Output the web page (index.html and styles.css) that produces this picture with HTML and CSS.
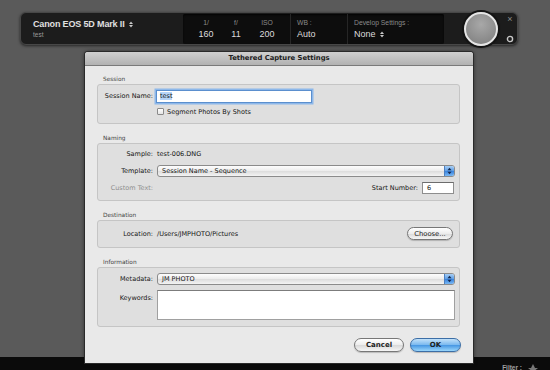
FILE: index.html
```html
<!DOCTYPE html>
<html lang="en">
<head>
    <meta charset="UTF-8" />
    <title>Tethered Capture Settings</title>
    <link rel="stylesheet" href="styles.css">
</head>
<body>

    <div class="escritorio">
        <div class="barra-camara">
            <div class="camara">
                <div class="camara-nombre">Canon EOS 5D Mark II
                    <svg class="flechas" width="4" height="7" viewBox="0 0 4 7"><polygon points="0,3 2,0.5 4,3" /><polygon points="0,4 2,6.5 4,4" /></svg>
                </div>
                <div class="camara-sesion">test</div>
            </div>

            <div class="panel">
                <div class="dato"><span class="etiqueta">1/</span><span class="valor">160</span></div>
                <div class="dato"><span class="etiqueta">f/</span><span class="valor">11</span></div>
                <div class="dato iso"><span class="etiqueta">ISO</span><span class="valor">200</span></div>
                <div class="separador"></div>
                <div class="dato izq wb"><span class="etiqueta">WB :</span><span class="valor">Auto</span></div>
                <div class="separador"></div>
                <div class="dato izq develop"><span class="etiqueta">Develop Settings :</span>
                    <span class="valor">None
                        <svg class="flechas" width="4" height="7" viewBox="0 0 4 7"><polygon points="0,3 2,0.5 4,3" /><polygon points="0,4 2,6.5 4,4" /></svg>
                    </span>
                </div>
            </div>

            <div class="disparador"></div>

            <div class="controles">
                <span class="cerrar">×</span>
                <svg width="8" height="8" viewBox="0 0 8 8"><circle cx="4" cy="4" r="2.6" fill="none" stroke="#c8c8c8" stroke-width="1.4" /></svg>
            </div>
        </div>

        <div class="area"></div>

        <div class="barra-inferior">
            <span>Filter :</span>
            <svg width="10" height="8" viewBox="0 0 10 8"><polygon points="5,0 7,4 10,4 5,8 0,4 3,4" fill="#777" /></svg>
        </div>
    </div>

    <div class="dialogo">
        <div class="dialogo-titulo">Tethered Capture Settings</div>

        <div class="dialogo-cuerpo">
            <div class="grupo-titulo">Session</div>
            <div class="grupo g-session">
                <div class="fila">
                    <span class="rotulo">Session Name:</span>
                    <div class="campo enfocado nombre"><span class="seleccion">test</span></div>
                </div>
                <div class="fila baja">
                    <span class="rotulo"></span>
                    <span class="casilla"></span>
                    <span class="texto-casilla">Segment Photos By Shots</span>
                </div>
            </div>

            <div class="grupo-titulo">Naming</div>
            <div class="grupo g-naming">
                <div class="fila">
                    <span class="rotulo">Sample:</span>
                    <span>test-006.DNG</span>
                </div>
                <div class="fila">
                    <span class="rotulo">Template:</span>
                    <div class="selector">
                        <span>Session Name - Sequence</span>
                        <span class="selector-boton">
                            <svg width="5" height="8" viewBox="0 0 5 8"><polygon points="0.5,3.2 2.5,0.8 4.5,3.2" /><polygon points="0.5,4.8 2.5,7.2 4.5,4.8" /></svg>
                        </span>
                    </div>
                </div>
                <div class="fila">
                    <span class="rotulo apagado">Custom Text:</span>
                    <span class="relleno"></span>
                    <span class="rotulo-derecho">Start Number:</span>
                    <div class="campo numero">6</div>
                </div>
            </div>

            <div class="grupo-titulo">Destination</div>
            <div class="grupo g-destination">
                <div class="fila alta">
                    <span class="rotulo">Location:</span>
                    <span>/Users/JMPHOTO/Pictures</span>
                    <span class="relleno"></span>
                    <button class="boton choose">Choose...</button>
                </div>
            </div>

            <div class="grupo-titulo">Information</div>
            <div class="grupo g-information">
                <div class="fila">
                    <span class="rotulo">Metadata:</span>
                    <div class="selector">
                        <span>JM PHOTO</span>
                        <span class="selector-boton">
                            <svg width="5" height="8" viewBox="0 0 5 8"><polygon points="0.5,3.2 2.5,0.8 4.5,3.2" /><polygon points="0.5,4.8 2.5,7.2 4.5,4.8" /></svg>
                        </span>
                    </div>
                </div>
                <div class="fila arriba">
                    <span class="rotulo">Keywords:</span>
                    <div class="area-texto"></div>
                </div>
            </div>

            <div class="acciones">
                <button class="boton cancelar">Cancel</button>
                <button class="boton ok">OK</button>
            </div>
        </div>
    </div>

</body>
</html>
```

FILE: styles.css
```css
body {
    margin: 0;
    width: 550px;
    height: 370px;
    overflow: hidden;
    background-color: #5a5a5a;
    font-family: "Liberation Sans", Arial, sans-serif;
    position: relative;
}

.escritorio {
    display: flex;
    flex-direction: column;
    height: 370px;
}

/* Barra de la cámara */
.barra-camara {
    display: flex;
    align-items: center;
    width: 498px;
    height: 33px;
    margin: 12px 0 0 20px;
    box-sizing: border-box;
    background: #1c1c1c;
    border: 1px solid #474747;
    border-radius: 6px;
    box-shadow: 0 1px 3px rgba(0,0,0,0.6);
}

.camara {
    width: 162px;
    padding-left: 12px;
    box-sizing: border-box;
}

.camara-nombre {
    color: #e0e0e0;
    font-size: 9px;
    line-height: 11px;
    font-weight: bold;
    letter-spacing: -0.15px;
    white-space: nowrap;
}

.flechas {
    fill: #c8c8c8;
    margin-left: 2px;
    vertical-align: -1px;
}

.camara-sesion {
    color: #9a9a9a;
    font-size: 6.5px;
    line-height: 9px;
}

.panel {
    display: flex;
    width: 261px;
    height: 30px;
    padding-left: 8px;
    box-sizing: border-box;
    background: #0d0d0d;
    border-radius: 2px;
    box-shadow: inset 0 1px 2px rgba(0,0,0,0.8);
}

.dato {
    display: flex;
    flex-direction: column;
    align-items: center;
    width: 30px;
    padding-top: 4px;
}

.dato.iso {
    width: 32px;
    margin-right: 7px;
}

.dato.izq {
    align-items: flex-start;
    padding-left: 6px;
}

.dato.wb {
    width: 56px;
    box-sizing: border-box;
}

.dato.develop {
    flex: 1;
    white-space: nowrap;
}

.etiqueta {
    color: #8a8a8a;
    font-size: 6.8px;
    line-height: 9px;
}

.valor {
    color: #dcdcdc;
    font-size: 9px;
    line-height: 12px;
    margin-top: 1px;
}

.separador {
    width: 1px;
    background: #262626;
}

.disparador {
    width: 30px;
    height: 30px;
    margin-left: 20px;
    border-radius: 50%;
    border: 2px solid #e6e6e6;
    background: radial-gradient(circle at 50% 35%, #a8a8a8, #7c7c7c);
    box-shadow: 0 0 0 2px #141414, 0 1px 3px rgba(0,0,0,0.8);
}

.controles {
    display: flex;
    flex-direction: column;
    align-items: center;
    justify-content: space-between;
    width: 14px;
    height: 28px;
    margin-left: 5px;
}

.cerrar {
    color: #8c8c8c;
    font-size: 9px;
    line-height: 9px;
}

.area {
    flex: 1;
}

.barra-inferior {
    display: flex;
    justify-content: flex-end;
    align-items: flex-start;
    gap: 6px;
    height: 13px;
    padding: 7px 12px 0 0;
    box-sizing: border-box;
    background: #0b0b0b;
    color: #a0a0a0;
    font-size: 6.5px;
    font-weight: bold;
}

/* Diálogo */
.dialogo {
    position: absolute;
    left: 85px;
    top: 52px;
    width: 388px;
    height: 311px;
    background: #e9e9e9;
    border-radius: 3px 3px 0 0;
    box-shadow: 0 0 0 1px #2a2a2a, 0 0 4px rgba(0,0,0,0.7);
    font-family: "DejaVu Sans", sans-serif;
    font-size: 6.5px;
    color: #141414;
}

.dialogo-titulo {
    height: 13px;
    line-height: 13px;
    text-align: center;
    font-size: 6.8px;
    font-weight: bold;
    color: #202020;
    background: linear-gradient(#d0d0d0, #b2b2b2);
    border-bottom: 1px solid #7a7a7a;
    border-radius: 3px 3px 0 0;
}

.dialogo-cuerpo {
    padding: 10px 13px 0 12px;
}

.grupo-titulo {
    height: 7px;
    line-height: 7px;
    margin-bottom: 1px;
    padding-left: 6px;
    font-size: 5.8px;
    color: #444;
}

.grupo {
    display: flex;
    flex-direction: column;
    box-sizing: border-box;
    margin-bottom: 11px;
    padding: 5px 4px 0 0;
    background: #dfdfdf;
    border: 1px solid #c5c5c5;
    border-radius: 3px;
}

.g-session { height: 40px; gap: 4px; }
.g-naming { height: 58px; gap: 5px; padding-top: 4px; }
.g-destination { height: 28px; padding-top: 6px; }
.g-information { height: 60px; gap: 5px; }

.fila {
    display: flex;
    align-items: center;
    height: 12px;
}

.fila.baja { height: 11px; }
.fila.alta { height: 13px; }
.fila.arriba { align-items: flex-start; height: 30px; }

.rotulo {
    width: 55px;
    margin-right: 4px;
    text-align: right;
    flex-shrink: 0;
}

.fila.arriba .rotulo {
    padding-top: 4px;
}

.apagado {
    color: #8e8e8e;
}

.relleno {
    flex: 1;
}

.rotulo-derecho {
    margin-right: 4px;
}

.campo {
    height: 13px;
    box-sizing: border-box;
    background: #fff;
    border: 1px solid #8e8e8e;
    border-top-color: #6c6c6c;
    padding-left: 3px;
    line-height: 11px;
}

.campo.nombre {
    width: 156px;
    margin-left: -1px;
}

.enfocado {
    border-color: #5b8fce;
    box-shadow: 0 0 0 1.5px #8db8ea;
}

.seleccion {
    background: #b6d4f8;
}

.campo.numero {
    width: 32px;
    height: 12px;
    margin-right: 1px;
    padding-left: 4px;
    line-height: 10px;
}

.casilla {
    width: 7px;
    height: 7px;
    box-sizing: border-box;
    border: 1px solid #8a8a8a;
    border-radius: 1px;
    background: linear-gradient(#fff, #e4e4e4);
}

.texto-casilla {
    margin-left: 3px;
}

.selector {
    display: flex;
    align-items: center;
    flex: 1;
    height: 12px;
    box-sizing: border-box;
    padding-left: 4px;
    border: 1px solid #8b8b8b;
    border-radius: 3px;
    background: linear-gradient(#fdfdfd, #ececec 50%, #dcdcdc 50%, #f3f3f3);
}

.selector span:first-child {
    flex: 1;
}

.selector-boton {
    display: flex;
    align-items: center;
    justify-content: center;
    width: 9px;
    height: 10px;
    border-left: 1px solid #4d7fc0;
    border-radius: 0 2px 2px 0;
    background: linear-gradient(#a6cdf5, #5d9ee6 50%, #357fdc 50%, #7ab9f4);
}

.selector-boton svg {
    fill: #14264a;
}

.area-texto {
    flex: 1;
    height: 30px;
    box-sizing: border-box;
    background: #fff;
    border: 1px solid #a0a0a0;
    border-top-color: #7c7c7c;
}

.boton {
    height: 13px;
    padding: 0;
    box-sizing: border-box;
    border: 1px solid #777;
    border-radius: 7px;
    font-family: "DejaVu Sans", sans-serif;
    font-size: 6.8px;
    color: #1e1e1e;
    background: linear-gradient(#ffffff, #ececec 50%, #d8d8d8 50%, #f6f6f6);
    box-shadow: 0 1px 1px rgba(0,0,0,0.2);
}

.boton.choose {
    width: 46px;
    margin-right: 2px;
}

.acciones {
    display: flex;
    justify-content: flex-end;
    gap: 6px;
    margin-top: 1px;
    margin-right: -1px;
}

.acciones .boton {
    height: 14px;
    font-size: 7px;
    font-weight: bold;
}

.cancelar {
    width: 50px;
}

.ok {
    width: 51px;
    border-color: #3c6ea6;
    background: linear-gradient(#c2e1f9, #79b8ef 50%, #4394e2 50%, #9ad6fb);
}
```
